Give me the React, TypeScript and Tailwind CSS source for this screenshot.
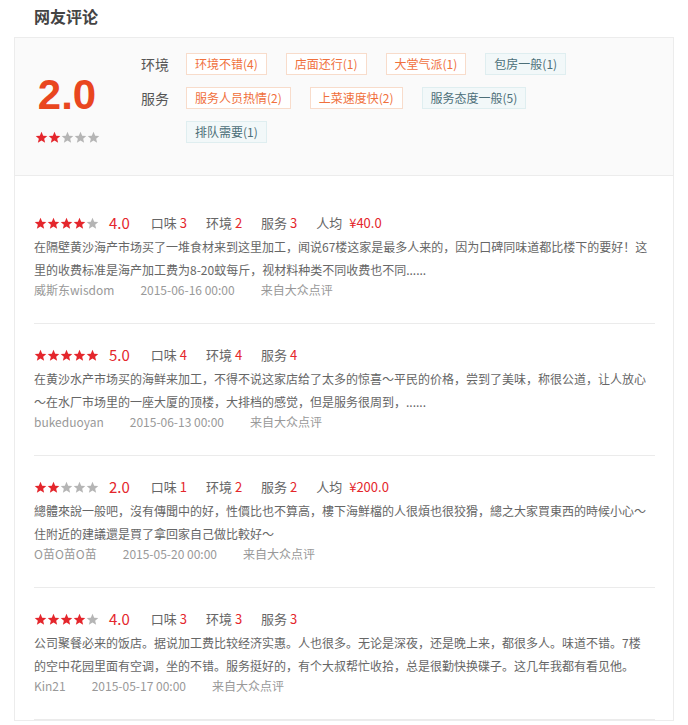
import * as React from "react";

type Review = {
  score: number;
  taste: number;
  env: number;
  service: number;
  avg?: string;
  text: string;
  user: string;
  date: string;
};

const ENV_TAGS: Array<{ label: string; good: boolean }> = [
  { label: "环境不错(4)", good: true },
  { label: "店面还行(1)", good: true },
  { label: "大堂气派(1)", good: true },
  { label: "包房一般(1)", good: false },
];

const SERVICE_TAGS: Array<{ label: string; good: boolean }> = [
  { label: "服务人员热情(2)", good: true },
  { label: "上菜速度快(2)", good: true },
  { label: "服务态度一般(5)", good: false },
  { label: "排队需要(1)", good: false },
];

const REVIEWS: Review[] = [
  {
    score: 4,
    taste: 3,
    env: 2,
    service: 3,
    avg: "¥40.0",
    text: "在隔壁黄沙海产市场买了一堆食材来到这里加工，闻说67楼这家是最多人来的，因为口碑同味道都比楼下的要好！这里的收费标准是海产加工费为8-20蚊每斤，视材料种类不同收费也不同......",
    user: "威斯东wisdom",
    date: "2015-06-16 00:00",
  },
  {
    score: 5,
    taste: 4,
    env: 4,
    service: 4,
    text: "在黄沙水产市场买的海鲜来加工，不得不说这家店给了太多的惊喜～平民的价格，尝到了美味，称很公道，让人放心～在水厂市场里的一座大厦的顶楼，大排档的感觉，但是服务很周到，......",
    user: "bukeduoyan",
    date: "2015-06-13 00:00",
  },
  {
    score: 2,
    taste: 1,
    env: 2,
    service: 2,
    avg: "¥200.0",
    text: "總體來說一般吧，沒有傳聞中的好，性價比也不算高，樓下海鮮檔的人很煩也很狡猾，總之大家買東西的時候小心～住附近的建議還是買了拿回家自己做比較好～",
    user: "O苗O苗O苗",
    date: "2015-05-20 00:00",
  },
  {
    score: 4,
    taste: 3,
    env: 3,
    service: 3,
    text: "公司聚餐必来的饭店。据说加工费比较经济实惠。人也很多。无论是深夜，还是晚上来，都很多人。味道不错。7楼的空中花园里面有空调，坐的不错。服务挺好的，有个大叔帮忙收拾，总是很勤快换碟子。这几年我都有看见他。",
    user: "Kin21",
    date: "2015-05-17 00:00",
  },
];

function Star({ on }: { on: boolean }) {
  return (
    <svg viewBox="0 0 24 24" className={`h-[13px] w-[13px] ${on ? "text-[#e4262c]" : "text-[#b5b5b5]"}`}>
      <path
        fill="currentColor"
        d="M12 1.5l3.1 7.1 7.6.6-5.8 5 1.8 7.5L12 17.7l-6.7 4 1.8-7.5-5.8-5 7.6-.6z"
      />
    </svg>
  );
}

function Stars({ count }: { count: number }) {
  return (
    <div className="flex items-center">
      {[0, 1, 2, 3, 4].map((i) => (
        <Star key={i} on={i < count} />
      ))}
    </div>
  );
}

function Tag({ label, good }: { label: string; good: boolean }) {
  return (
    <span
      className={`inline-flex h-[22px] items-center border px-2 text-[12px] ${
        good
          ? "border-[#f8dccb] bg-white text-[#f0703c]"
          : "border-[#dfeef0] bg-[#f2f8f9] text-[#4c6f78]"
      }`}
    >
      {label}
    </span>
  );
}

function ReviewItem({ review }: { review: Review }) {
  return (
    <div className="border-b border-[#ebebeb] pb-[24px] pt-[21px]">
      <div className="flex h-[20px] items-center text-[13px] text-[#666]">
        <Stars count={review.score} />
        <span className="ml-[10px] text-[15px] text-[#e4262c]">{review.score.toFixed(1)}</span>
        <span className="ml-[21px]">
          口味 <span className="text-[#e4262c]">{review.taste}</span>
        </span>
        <span className="ml-[19px]">
          环境 <span className="text-[#e4262c]">{review.env}</span>
        </span>
        <span className="ml-[19px]">
          服务 <span className="text-[#e4262c]">{review.service}</span>
        </span>
        {review.avg ? (
          <span className="ml-[19px]">
            人均 <span className="ml-1 text-[#e4262c]">{review.avg}</span>
          </span>
        ) : null}
      </div>
      <p className="mt-[2px] pr-[5px] text-[12px] leading-[23px] text-[#666]">{review.text}</p>
      <div className="flex h-[18px] items-center gap-[26px] text-[12px] text-[#999]">
        <span>{review.user}</span>
        <span>{review.date}</span>
        <span>来自大众点评</span>
      </div>
    </div>
  );
}

export default function App() {
  return (
    <div
      className="min-h-screen bg-white pb-4"
      style={{ fontFamily: '"Noto Sans CJK SC", "Noto Sans", sans-serif' }}
    >
      <div className="px-[34px] pt-[3px] text-[16px] font-bold leading-[26px] text-[#444]">网友评论</div>
      <div className="mx-[14px] mt-[8px] border border-[#ececec]">
        <div className="flex border-b border-[#ececec] bg-[#fafafa] pb-[31px] pt-[15px]">
          <div className="flex w-[104px] shrink-0 flex-col items-center pt-[21px]">
            <div className="font-['Liberation_Sans',sans-serif] text-[42px] font-bold leading-[42px] text-[#e9461f]">
              2.0
            </div>
            <div className="mt-[15px]">
              <Stars count={2} />
            </div>
          </div>
          <div className="ml-[22px] flex flex-col gap-[12px]">
            <div className="flex">
              <span className="w-[45px] shrink-0 text-[14px] leading-[22px] text-[#555]">环境</span>
              <div className="flex max-w-[400px] flex-wrap gap-x-[19px] gap-y-[12px]">
                {ENV_TAGS.map((t) => (
                  <Tag key={t.label} {...t} />
                ))}
              </div>
            </div>
            <div className="flex">
              <span className="w-[45px] shrink-0 text-[14px] leading-[22px] text-[#555]">服务</span>
              <div className="flex max-w-[400px] flex-wrap gap-x-[19px] gap-y-[12px]">
                {SERVICE_TAGS.map((t) => (
                  <Tag key={t.label} {...t} />
                ))}
              </div>
            </div>
          </div>
        </div>
        <div className="pl-[19px] pr-[18px] pt-[16px]">
          {REVIEWS.map((r) => (
            <ReviewItem key={r.user} review={r} />
          ))}
        </div>
      </div>
    </div>
  );
}
